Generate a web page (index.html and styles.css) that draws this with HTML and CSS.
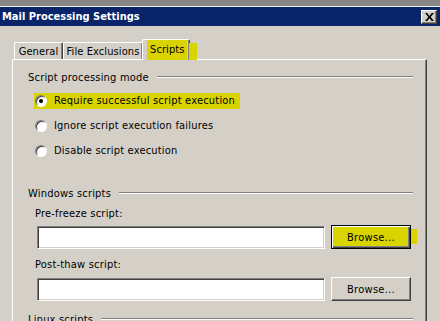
FILE: index.html
```html
<!DOCTYPE html>
<html lang="en">
  <head>
    <meta charset="UTF-8" />
    <title>Mail Processing Settings</title>
    <link rel="stylesheet" href="styles.css">
  </head>
  <body>
    <div class="desktop-strip"></div>
    <div class="titlebar">
      <span class="title">Mail Processing Settings</span>
      <button class="close-btn" aria-label="Close">
        <svg width="8" height="7" viewBox="0 0 8 7">
          <path d="M0 0h2l2 2.5 2-2.5h2l-3 3.5 3 3.5h-2l-2-2.5-2 2.5h-2l3-3.5z" fill="#000" />
        </svg>
      </button>
    </div>

    <div class="dialog">
      <div class="tabs">
        <div class="tab tab-general">General</div>
        <div class="tab tab-files">File Exclusions</div>
        <div class="tab tab-active"><span class="mark">Scripts</span></div>
      </div>

      <div class="tab-panel">
        <div class="group-title first">
          <span>Script processing mode</span>
          <span class="rule"></span>
        </div>

        <div class="radio-row">
          <label class="radio-label mark">
            <span class="radio checked"></span>
            <span>Require successful script execution</span>
          </label>
        </div>
        <div class="radio-row">
          <label class="radio-label">
            <span class="radio"></span>
            <span>Ignore script execution failures</span>
          </label>
        </div>
        <div class="radio-row">
          <label class="radio-label">
            <span class="radio"></span>
            <span>Disable script execution</span>
          </label>
        </div>

        <div class="group-title second">
          <span>Windows scripts</span>
          <span class="rule"></span>
        </div>

        <div class="field-label first-label">Pre-freeze script:</div>
        <div class="field-row">
          <input class="text-input" type="text" />
          <button class="btn btn-default mark">Browse...</button>
        </div>

        <div class="field-label">Post-thaw script:</div>
        <div class="field-row">
          <input class="text-input" type="text" />
          <button class="btn">Browse...</button>
        </div>

        <div class="group-title third">
          <span>Linux scripts</span>
          <span class="rule"></span>
        </div>
      </div>
    </div>
  </body>
</html>
```

FILE: styles.css
```css
* {
  box-sizing: border-box;
  margin: 0;
  padding: 0;
}

html,
body {
  height: 100%;
  overflow: hidden;
}

body {
  background-color: #d4d0c8;
  font-family: "DejaVu Sans Condensed", "DejaVu Sans", sans-serif;
  font-size: 11px;
  letter-spacing: 0.2px;
  color: #000;
}

/* top of the screen behind the window */
.desktop-strip {
  height: 7px;
  background-color: #878787;
  border-bottom: 1px solid #f2f2f2;
}

.titlebar {
  height: 19px;
  background-color: #0a246a;
  display: flex;
  align-items: center;
  justify-content: space-between;
  padding: 0 3px 0 2px;
}

.title {
  color: #fff;
  font-weight: 700;
  font-size: 11px;
  letter-spacing: 0;
}

.close-btn {
  width: 16px;
  height: 14px;
  background-color: #d4d0c8;
  border: 1px solid;
  border-color: #fff #404040 #404040 #fff;
  box-shadow: inset -1px -1px #808080;
  display: flex;
  align-items: center;
  justify-content: center;
  margin-top: 1px;
}

.close-btn svg {
  width: 9px;
  height: 8px;
}

.dialog {
  padding-top: 12px;
}

/* tab strip */
.tabs {
  display: flex;
  align-items: flex-end;
  height: 21px;
  padding-left: 14px;
  position: relative;
  z-index: 1;
}

.tab {
  height: 17px;
  border-top: 1px solid #fff;
  border-left: 1px solid #fff;
  border-right: 1px solid #404040;
  box-shadow: inset -1px 0 #808080;
  border-radius: 2px 2px 0 0;
  display: flex;
  align-items: center;
  justify-content: center;
  letter-spacing: 0.1px;
}

.tab-general {
  width: 49px;
}

.tab-files {
  width: 80px;
}

.tab-active {
  height: 21px;
  width: 48px;
  margin: 0 0 -1px -1px;
  background-color: #d4d0c8;
  align-items: flex-start;
  justify-content: flex-start;
  padding: 0 0 0 4px;
  position: relative;
}

.tab-active .mark {
  display: block;
  height: 20px;
  width: 40px;
  padding: 3px 0 0 3px;
}

.tab-active::after {
  content: "";
  position: absolute;
  right: -8px;
  top: 3px;
  width: 8px;
  height: 17px;
  background-color: #d9d400;
}

.mark {
  background-color: #d9d400;
}

/* panel */
.tab-panel {
  margin-left: 12px;
  width: 415px;
  height: 262px;
  border-top: 1px solid #fff;
  border-left: 1px solid #fff;
  border-right: 1px solid #404040;
  box-shadow: inset -1px 0 #808080;
  padding: 0 13px 0 15px;
  overflow: hidden;
}

.group-title {
  display: flex;
  align-items: center;
  height: 14px;
  gap: 8px;
}

.group-title.first {
  margin-top: 10px;
}

.group-title.second {
  margin-top: 23px;
}

.group-title.third {
  margin-top: 11px;
}

.rule {
  flex: 1;
  border-top: 1px solid #808080;
  border-bottom: 1px solid #fff;
  margin-top: -1px;
}

.radio-row {
  height: 25px;
  display: flex;
  align-items: center;
  padding-left: 6px;
}

.group-title.first + .radio-row {
  margin-top: 4px;
}

.radio-label {
  display: inline-flex;
  align-items: center;
  gap: 7px;
  height: 16px;
  padding: 0 5px 0 1px;
}

.radio {
  width: 12px;
  height: 12px;
  border-radius: 50%;
  background-color: #fff;
  border: 1px solid;
  border-color: #808080 #fff #fff #808080;
  box-shadow: inset 1px 1px #404040;
  display: flex;
  align-items: center;
  justify-content: center;
}

.radio.checked::before {
  content: "";
  width: 4px;
  height: 4px;
  border-radius: 50%;
  background-color: #000;
}

.field-label {
  height: 14px;
  display: flex;
  align-items: center;
  padding-left: 7px;
  margin-top: 8px;
}

.field-label.first-label {
  margin-top: 6px;
}

.field-row {
  display: flex;
  align-items: center;
  height: 24px;
  margin-top: 6px;
  padding-left: 9px;
}

.field-label.first-label + .field-row {
  margin-top: 5px;
}

.text-input {
  width: 288px;
  height: 23px;
  background-color: #fff;
  border: 1px solid;
  border-color: #808080 #fff #fff #808080;
  box-shadow: inset 1px 1px #404040, inset -1px -1px #d4d0c8;
  outline: none;
}

.btn {
  width: 80px;
  height: 24px;
  margin-left: 6px;
  font-family: inherit;
  font-size: 11px;
  letter-spacing: 0.3px;
  color: #000;
  background-color: #d4d0c8;
  border: 1px solid;
  border-color: #fff #404040 #404040 #fff;
  box-shadow: inset -1px -1px #808080;
}

.btn-default {
  border: 1px solid #000;
  box-shadow: inset 1px 1px #fff, inset -1px -1px #404040, inset -2px -2px #808080;
  background-color: #d9d400;
  position: relative;
}

.btn-default::after {
  content: "";
  position: absolute;
  right: -7px;
  top: 3px;
  width: 6px;
  height: 15px;
  background-color: #d9d400;
}
```
